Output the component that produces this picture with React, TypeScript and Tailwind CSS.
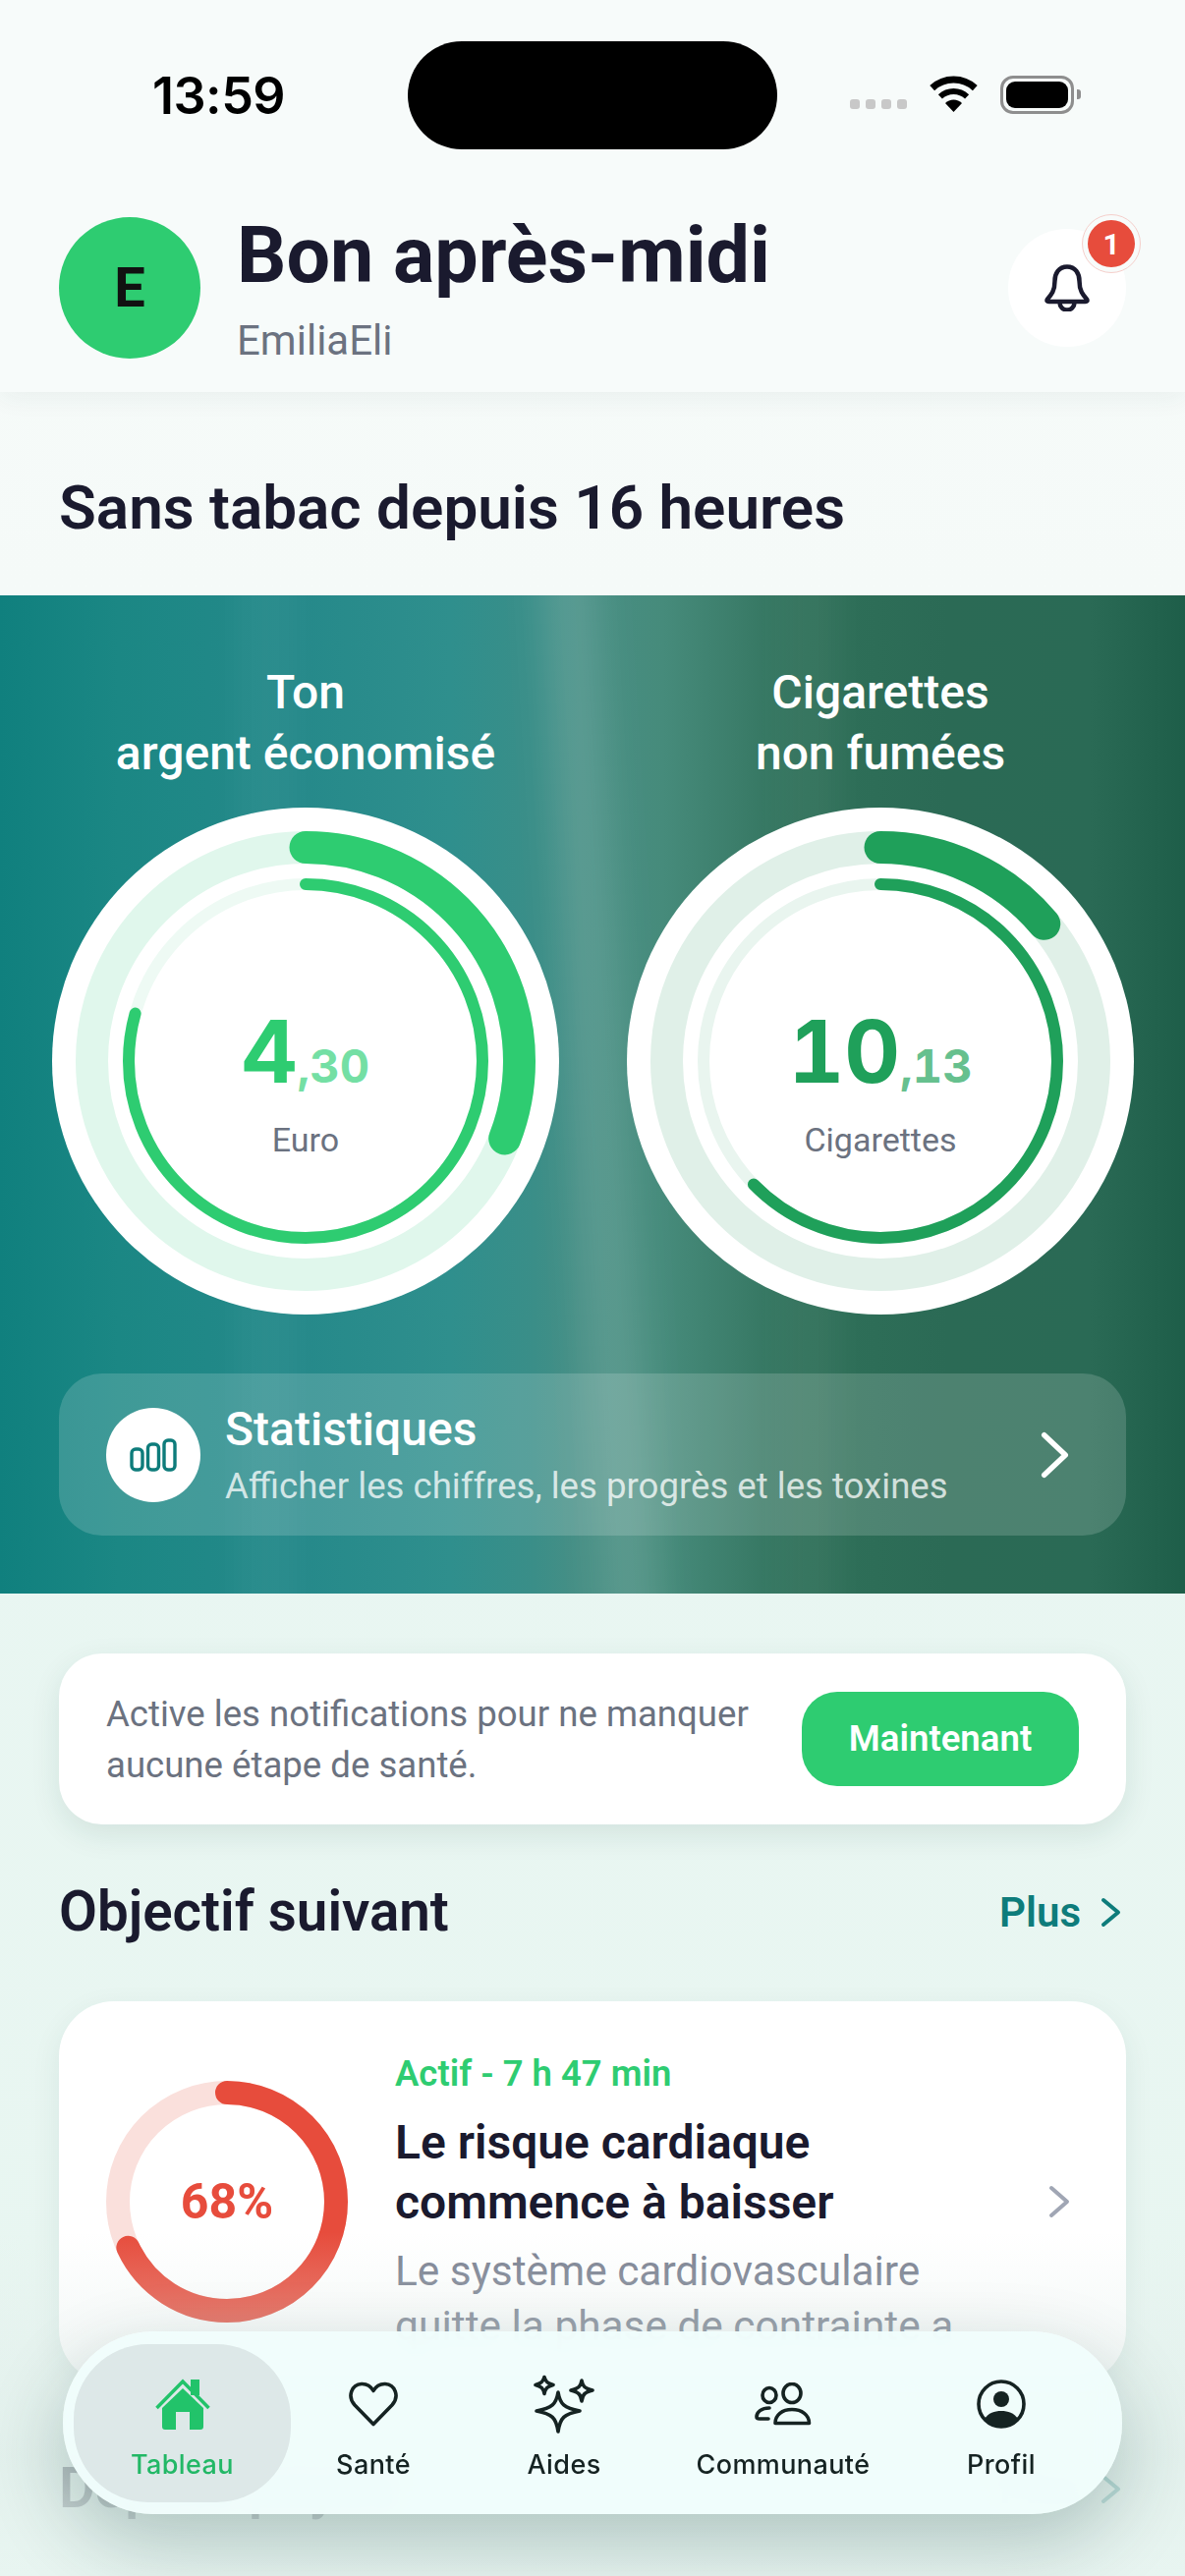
import React from "react";

const inter = "font-['Inter',sans-serif]";
const roboto = "font-['Roboto',sans-serif]";

function Ring({ track, track2, color, outer, inner, whole, frac, label, fracColor }: { track: string; track2: string; color: string; outer: number; inner: number; whole: string; frac: string; label: string; fracColor: string }) {
  const r1 = 217.5;
  const r2 = 180;
  const c1 = 2 * Math.PI * r1;
  const c2 = 2 * Math.PI * r2;
  return (
    <div className="relative w-[516px] h-[516px]">
      <svg width="516" height="516" viewBox="0 0 516 516" className="block">
        <circle cx="258" cy="258" r="258" fill="#fff" />
        <circle cx="258" cy="258" r={r1} fill="none" stroke={track} strokeWidth="33" />
        <circle cx="258" cy="258" r={r2} fill="none" stroke={track2} strokeWidth="12" />
        <circle cx="258" cy="258" r={r1} fill="none" stroke={color} strokeWidth="33" strokeLinecap="round" strokeDasharray={`${c1 * outer} ${c1}`} transform="rotate(-90 258 258)" />
        <circle cx="258" cy="258" r={r2} fill="none" stroke={color} strokeWidth="12" strokeLinecap="round" strokeDasharray={`${c2 * inner} ${c2}`} transform="rotate(-90 258 258)" />
      </svg>
      <div className="absolute inset-0 flex flex-col items-center pt-[192px]">
        <div className={`flex items-baseline font-bold h-[112px] tabular-nums ${inter}`}>
          <span className="text-[88px] leading-[112px]" style={{ color }}>{whole}</span>
          <span className="text-[47px] leading-[112px]" style={{ color: fracColor }}>{frac}</span>
        </div>
        <div className={`text-[34px] leading-[44px] text-[#6b7280] mt-[12px] ${roboto}`}>{label}</div>
      </div>
    </div>
  );
}

function Chevron({ w, h, color, sw }: { w: number; h: number; color: string; sw: number }) {
  return (
    <svg width={w} height={h} viewBox={`0 0 ${w} ${h}`} fill="none" className="block shrink-0">
      <path d={`M${sw / 2 + 1} ${sw / 2 + 1} L${w - sw / 2 - 1} ${h / 2} L${sw / 2 + 1} ${h - sw / 2 - 1}`} stroke={color} strokeWidth={sw} strokeLinecap="round" strokeLinejoin="round" />
    </svg>
  );
}

function NavItem({ width, label, icon, active }: { width: string; label: string; icon: React.ReactNode; active?: boolean }) {
  return (
    <div className={`flex flex-col items-center shrink-0 h-[161px] ${width} ${active ? "bg-[#dde8e8] rounded-[76px]" : ""}`}>
      <div className="h-[98px] w-full flex items-center justify-center pt-[24px]">{icon}</div>
      <div className={`mt-[8px] text-[27px] leading-[34px] font-medium tracking-[0.4px] ${active ? "text-[#22b866]" : "text-[#152322]"} ${inter}`}>{label}</div>
    </div>
  );
}

export default function App() {
  return (
    <div className={`relative w-[1206px] h-[2622px] overflow-hidden bg-[linear-gradient(180deg,#f7fbfa_0%,#f5faf8_23%,#e9f6f2_40%,#e8f6f1_100%)] ${roboto}`}>
      <header className="h-[399px] bg-[#f7fbfa] shadow-[0_6px_24px_rgba(40,70,60,0.06)] relative">
        <div className="h-[152px] pt-[42px] flex items-center pl-[155px]">
          <div className={`w-[260px] text-[52px] leading-[56px] font-semibold text-black tracking-[-0.5px] mt-[2px] ${inter}`}>13:59</div>
          <div className="w-[376px] h-[110px] rounded-[55px] bg-black" />
          <div className="flex items-center ml-[74px]">
            <div className="flex gap-[6px] mt-[18px]">
              <div className="w-[10px] h-[10px] rounded-[3px] bg-[#c8c8c8]" />
              <div className="w-[10px] h-[10px] rounded-[3px] bg-[#c8c8c8]" />
              <div className="w-[10px] h-[10px] rounded-[3px] bg-[#c8c8c8]" />
              <div className="w-[10px] h-[10px] rounded-[3px] bg-[#c8c8c8]" />
            </div>
            <svg width="51" height="38" viewBox="0 0 51 38" fill="none" className="ml-[22px] mt-[-2px]">
              <path d="M3.7 12.6 A32 32 0 0 1 47.3 12.6" stroke="#000" strokeWidth="7" />
              <path d="M11.9 21.4 A20 20 0 0 1 39.1 21.4" stroke="#000" strokeWidth="6" />
              <path d="M25.5 37 L17 28 A12 12 0 0 1 34 28 Z" fill="#000" />
            </svg>
            <div className="ml-[22px] w-[75px] h-[39px] rounded-[13px] border-[3px] border-[#8e8e8e] p-[3px] mt-[-2px]">
              <div className="w-full h-full rounded-[9px] bg-black" />
            </div>
            <div className="w-[4px] h-[10px] ml-[3px] rounded-r-[3px] bg-[#8e8e8e] mt-[-2px]" />
          </div>
        </div>
        <div className="flex items-center px-[60px] mt-[69px]">
          <div className="w-[144px] h-[144px] rounded-full bg-[#2ecc71] flex items-center justify-center text-[56px] font-bold text-[#111]">E</div>
          <div className="ml-[37px] flex-1 h-[144px]">
            <div className="mt-[-6px] text-[79px] leading-[90px] font-bold text-[#1a1a2e]">Bon après-midi</div>
            <div className="text-[42px] leading-[50px] text-[#6b7280] mt-[17px]">EmiliaEli</div>
          </div>
          <div className="relative w-[120px] h-[120px] rounded-full bg-white flex items-center justify-center">
            <svg width="46" height="48" viewBox="0 0 46 48" fill="none">
              <path d="M23 2.5 C14.5 2.5 10.5 9.5 10.5 17 C10.5 27 7 31 3 35.5 Q1.5 38 4.5 38 H41.5 Q44.5 38 43 35.5 C39 31 35.5 27 35.5 17 C35.5 9.5 31.5 2.5 23 2.5 Z" stroke="#1a1a2e" strokeWidth="4.5" strokeLinejoin="round" />
              <path d="M15.5 39 A7.5 7.5 0 0 0 30.5 39" stroke="#1a1a2e" strokeWidth="4.5" />
            </svg>
            <div className="absolute left-[75px] top-[-15px] w-[60px] h-[60px] rounded-full bg-[#f8fbfa] border border-[#f5cfcb] flex items-center justify-center">
              <div className="w-[48px] h-[48px] rounded-full bg-[#e74c3c] flex items-center justify-center text-white text-[30px] font-bold">1</div>
            </div>
          </div>
        </div>
      </header>

      <div className="pl-[60px] pt-[84px] h-[207px] text-[62px] leading-[68px] font-semibold text-[#1a1a2e]">Sans tabac depuis 16 heures</div>

      <section className="relative h-[1016px] overflow-hidden bg-[linear-gradient(90deg,#10807e_0%,#1b8784_10%,#25898a_25%,#2f8f8d_38%,#3a8e88_45%,#478f85_49%,#468b7b_56%,#3c7e6b_62%,#2f7059_68%,#2b6a55_80%,#2a6a55_92%,#1e5e49_100%)]">
        <div className="absolute left-[582px] top-[-60px] w-[56px] h-[1140px] bg-white/[0.11] blur-[18px] rotate-[-3.5deg]" />
        <div className="absolute left-[240px] top-[-40px] w-[60px] h-[1100px] bg-white/[0.04] blur-[16px]" />
        <div className="absolute left-[800px] top-[-40px] w-[50px] h-[1100px] bg-white/[0.05] blur-[18px]" />
        <div className="relative flex gap-[69px] pl-[53px] pt-[68px]">
          <div className="flex flex-col items-center w-[516px]">
            <div className="text-center text-[48px] leading-[62px] font-medium text-white mb-[24px]">Ton<br />argent économisé</div>
            <Ring track="#e0f7ec" track2="#eefaf4" color="#2ecc71" fracColor="#74dfa4" outer={0.309} inner={0.793} whole="4" frac=",30" label="Euro" />
          </div>
          <div className="flex flex-col items-center w-[516px]">
            <div className="text-center text-[48px] leading-[62px] font-medium text-white mb-[24px]">Cigarettes<br />non fumées</div>
            <Ring track="#e0f0e8" track2="#e9f5ef" color="#1fa05a" fracColor="#66c08e" outer={0.139} inner={0.627} whole="10" frac=",13" label="Cigarettes" />
          </div>
        </div>
        <div className="relative mx-[60px] mt-[60px] h-[165px] rounded-[44px] bg-white/[0.16] flex items-center pl-[48px] pr-[58px]">
          <div className="w-[96px] h-[96px] rounded-full bg-white flex items-center justify-center shrink-0">
            <svg width="48" height="34" viewBox="0 0 48 34" fill="none" stroke="#0e7c7b" strokeWidth="3.4">
              <rect x="2" y="11" width="11" height="21" rx="4" />
              <rect x="18.5" y="6" width="11" height="26" rx="4" />
              <rect x="35" y="2" width="11" height="30" rx="4" />
            </svg>
          </div>
          <div className="ml-[25px] flex-1">
            <div className="text-[48px] leading-[56px] font-medium text-white">Statistiques</div>
            <div className="text-[36.6px] leading-[44px] text-white/75 mt-[8px]">Afficher les chiffres, les progrès et les toxines</div>
          </div>
          <Chevron w={29} h={48} color="#fff" sw={5.5} />
        </div>
      </section>

      <div className="mx-[60px] mt-[61px] h-[174px] rounded-[44px] bg-white shadow-[0_10px_30px_rgba(20,70,60,0.10)] flex items-center pl-[48px] pr-[48px] justify-between">
        <div className="text-[36.6px] leading-[52px] text-[#6b7280] pt-[2px]">Active les notifications pour ne manquer<br />aucune étape de santé.</div>
        <div className="w-[282px] h-[96px] rounded-[36px] bg-[#2ecc71] flex items-center justify-center text-white text-[36.6px] font-semibold">Maintenant</div>
      </div>

      <div className="mx-[60px] mt-[57px] mb-[59px] h-[64px] flex items-center justify-between">
        <div className="text-[56.5px] leading-[64px] font-semibold text-[#1a1a2e]">Objectif suivant</div>
        <div className="flex items-center gap-[20px] pr-[5px]">
          <div className="text-[42px] font-semibold text-[#0e7c7b]">Plus</div>
          <Chevron w={21} h={31} color="#0e7c7b" sw={4} />
        </div>
      </div>

      <div className="mx-[60px] h-[390px] rounded-[56px] bg-white shadow-[0_10px_30px_rgba(20,70,60,0.08)] flex items-start overflow-hidden pl-[48px]">
        <div className="relative w-[246px] h-[246px] mt-[81px] shrink-0">
          <svg width="246" height="246" viewBox="0 0 246 246" fill="none">
            <circle cx="123" cy="123" r="111" stroke="#fae0dc" strokeWidth="24" />
            <circle cx="123" cy="123" r="111" stroke="#e74c3c" strokeWidth="24" strokeLinecap="round" strokeDasharray={`${2 * Math.PI * 111 * 0.68} 1000`} transform="rotate(-90 123 123)" />
          </svg>
          <div className="absolute inset-0 flex items-center justify-center text-[50px] font-bold text-[#e74c3c]">68%</div>
        </div>
        <div className="ml-[48px] w-[610px] shrink-0 pt-[50px]">
          <div className="text-[36.5px] leading-[48px] font-semibold text-[#2ecc71]">Actif - 7 h 47 min</div>
          <div className="mt-[15px] text-[48px] leading-[61px] font-semibold text-[#1a1a2e]">Le risque cardiaque<br />commence à baisser</div>
          <div className="mt-[12px] text-[42.4px] leading-[56px] text-[#7a8090]">Le système cardiovasculaire<br />quitte la phase de contrainte a</div>
        </div>
        <div className="ml-[55px] mt-[187px]"><Chevron w={22} h={34} color="#a0a6b4" sw={4} /></div>
      </div>

      <div className="mx-[60px] mt-[74px] h-[64px] flex items-center justify-between">
        <div className="text-[56.5px] leading-[64px] font-semibold text-[#1a1a2e]">Dépôts payés</div>
        <div className="flex items-center gap-[20px] pr-[5px]">
          <div className="text-[42px] font-semibold text-[#0e7c7b]">Plus</div>
          <Chevron w={21} h={31} color="#0e7c7b" sw={4} />
        </div>
      </div>

      <div className="absolute left-0 right-0 bottom-0 h-[350px] bg-[linear-gradient(180deg,rgba(226,238,235,0)_0%,rgba(226,238,235,0.4)_35%,rgba(226,240,236,0.75)_65%,rgba(232,245,241,0.95)_100%)]" />

      <nav className="absolute left-[64px] bottom-[63px] w-[1078px] h-[186px] rounded-[92px] bg-[#f0fdfc]/95 backdrop-blur-md shadow-[0_30px_80px_rgba(0,50,45,0.24)] flex items-center pl-[11px]">
        <NavItem width="w-[221px]" label="Tableau" active icon={
          <svg width="56" height="54" viewBox="0 0 56 54" fill="none">
            <rect x="36" y="2" width="9" height="16" fill="#22c36a" />
            <path d="M28 11 L7 31 V50 Q7 53 10 53 H21 V35 H35 V53 H46 Q49 53 49 50 V31 Z" fill="#22c36a" />
            <path d="M1.5 31 L28 4 L54.5 31" stroke="#22c36a" strokeWidth="3.5" />
          </svg>} />
        <NavItem width="w-[168px]" label="Santé" icon={
          <svg width="52" height="46" viewBox="0 0 52 46" fill="none">
            <path d="M26 43.5 L7 24 C-1 15 4 3 14 2.5 C19.5 2.3 23.5 5 26 9.5 C28.5 5 32.5 2.3 38 2.5 C48 3 53 15 45 24 Z" stroke="#152322" strokeWidth="3.6" strokeLinejoin="round" />
          </svg>} />
        <NavItem width="w-[220px]" label="Aides" icon={
          <svg width="62" height="60" viewBox="0 0 62 60" fill="none" stroke="#152322" strokeWidth="3.6" strokeLinejoin="round">
            <path d="M25 18 C27 30 31 34 47 37 C31 40 27 44 25 58 C23 44 19 40 3 37 C19 34 23 30 25 18 Z" />
            <path d="M11 2.5 C12 7 14 9 20 10.5 C14 12 12 14 11 19.5 C10 14 8 12 2 10.5 C8 9 10 7 11 2.5 Z" />
            <path d="M49 6 C50 12 52 14 60 16 C52 18 50 20 49 27 C48 20 46 18 38 16 C46 14 48 12 49 6 Z" />
          </svg>} />
        <NavItem width="w-[226px]" label="Communauté" icon={
          <svg width="58" height="44" viewBox="0 0 58 44" fill="none" stroke="#152322" strokeWidth="3.6">
            <ellipse cx="38" cy="11" rx="9" ry="9.5" />
            <ellipse cx="15" cy="13" rx="7" ry="7.5" />
            <path d="M21 41.5 C21 33 28 27.5 38 27.5 C48 27.5 55.5 33 55.5 41.5 Z" strokeLinejoin="round" />
            <path d="M15 26 C7 26 2 30 2 35 Q2 37 5 37 H14" strokeLinecap="round" />
          </svg>} />
        <NavItem width="w-[218px]" label="Profil" icon={
          <svg width="50" height="50" viewBox="0 0 50 50" fill="none">
            <circle cx="25" cy="25" r="23" stroke="#152322" strokeWidth="3.6" />
            <circle cx="25" cy="20" r="8" fill="#152322" />
            <path d="M8 40 C12 34 18 32 25 32 C32 32 38 34 42 40 C38 45 32 48 25 48 C18 48 12 45 8 40 Z" fill="#152322" />
          </svg>} />
      </nav>
    </div>
  );
}
